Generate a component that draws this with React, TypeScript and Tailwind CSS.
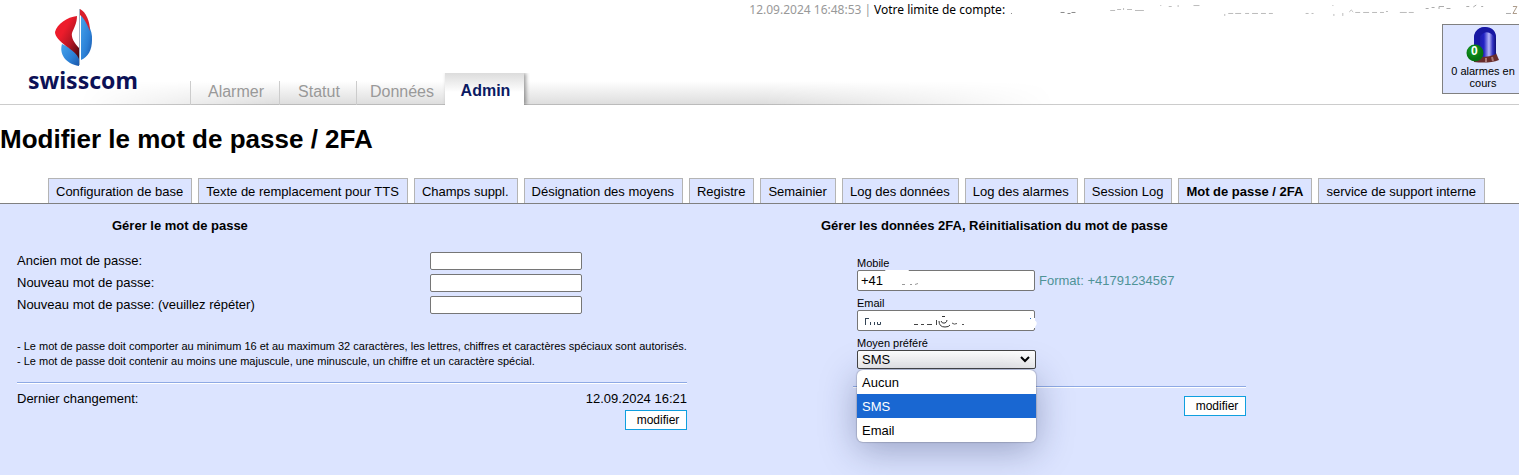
import { useState } from "react"
import clsx from "clsx"

const mainTabs = [
  { label: "Alarmer", width: "w-[89px]" },
  { label: "Statut", width: "w-[77px]" },
  { label: "Données", width: "w-[89px]" },
]

const subTabs = [
  "Configuration de base",
  "Texte de remplacement pour TTS",
  "Champs suppl.",
  "Désignation des moyens",
  "Registre",
  "Semainier",
  "Log des données",
  "Log des alarmes",
  "Session Log",
  "Mot de passe / 2FA",
  "service de support interne",
]

const passwordFields = [
  { id: "old", label: "Ancien mot de passe:" },
  { id: "new", label: "Nouveau mot de passe:" },
  { id: "repeat", label: "Nouveau mot de passe: (veuillez répéter)" },
]

const channels = ["Aucun", "SMS", "Email"]

function Logo() {
  return (
    <a href="#" className="z-10 col-start-1 row-start-1 mt-2 ml-7 flex w-28 flex-col self-start">
      <svg className="ml-[26px]" width="40" height="58" viewBox="0 0 40 58" aria-hidden="true">
        <defs>
          <linearGradient id="red" x1="0" y1="0" x2="1" y2="1">
            <stop offset="0.35" stopColor="#ed1c2b" />
            <stop offset="0.65" stopColor="#b01522" />
            <stop offset="0.95" stopColor="#4c0910" />
          </linearGradient>
          <linearGradient id="blue" x1="0" y1="0" x2="1" y2="1">
            <stop offset="0" stopColor="#46a4ec" />
            <stop offset="0.6" stopColor="#2b80d6" />
            <stop offset="1" stopColor="#1a55a8" />
          </linearGradient>
        </defs>
        <path d="M8 36C5 45 11 56 25 58V48C22 44 15 39 8 36Z" fill="url(#blue)" />
        <path d="M23 8C13 9 3 16 1 24C1 29 6 33 12 38C19 43 23 46 25 51V40C20 35 17 29 18 25C20 20 23 15 23 8Z" fill="url(#red)" />
        <path d="M27 7C32 12 39 22 38 32C38 42 34 49 27 52Z" fill="url(#blue)" />
        <path d="M26 1C32 4 36 13 36 23C33 16 30 10 26 7Z" fill="#d81f2c" />
        <path d="M25.5 1V57" stroke="#a9b4c4" strokeWidth="1" />
      </svg>
      <span className="font-['Noto_Sans'] text-[23px] leading-[28px] font-bold text-[#0c1156]">swisscom</span>
    </a>
  )
}

function AlarmBox() {
  return (
    <a
      href="#"
      className="z-10 col-start-1 row-start-1 mt-6 flex h-[70px] w-[77px] flex-col items-center self-start justify-self-end border border-r-0 border-[#808080] bg-[#dce4ff] pt-[2px] pl-1 text-center text-[11px] leading-[12px]"
    >
      <span className="relative mb-[2px] block">
        <svg width="34" height="36" viewBox="0 0 34 36" aria-hidden="true">
          <defs>
            <linearGradient id="lamp">
              <stop offset="0" stopColor="#17178c" />
              <stop offset="0.45" stopColor="#2222c4" />
              <stop offset="0.68" stopColor="#b8b8fa" />
              <stop offset="0.85" stopColor="#3030c0" />
              <stop offset="1" stopColor="#0e0e74" />
            </linearGradient>
            <radialGradient id="ball" cx="0.4" cy="0.35">
              <stop offset="0" stopColor="#18a428" />
              <stop offset="1" stopColor="#067310" />
            </radialGradient>
          </defs>
          <path d="M8 29L30 26L33 33C26 36 16 36 8 35Z" fill="#682c2c" />
          <path d="M20 35V31M27 34L26 30" stroke="#a77" strokeWidth="2" />
          <path d="M8 29V11C8 4 13 0 19 0C26 0 30 4 30 11V27C24 30 14 31 8 29Z" fill="url(#lamp)" />
          <path d="M8 12C8 4 13 0 19 0C26 0 30 4 30 12C25 4 19 3 14 9V26L8 28Z" fill="#1818a4" />
          <circle cx="9" cy="26" r="8.5" fill="url(#ball)" />
        </svg>
        <span className="absolute top-[18px] left-[5px] text-[12px] leading-[13px] font-bold text-white">0</span>
      </span>
      0 alarmes en cours
    </a>
  )
}

function Rule({ className }: { className?: string }) {
  return <hr className={clsx("h-[2px] border-t border-b border-t-[#8ea9e4] border-b-white", className)} />
}

function SubmitButton() {
  return (
    <button type="submit" className="h-5 w-[62px] border border-[#0f9fdf] bg-white pl-1 text-[12px] leading-[18px]">
      modifier
    </button>
  )
}

function PasswordForm() {
  return (
    <form className="w-[670px]" onSubmit={(e) => e.preventDefault()}>
      <h2 className="pl-[95px] leading-5 font-bold">Gérer le mot de passe</h2>
      <div className="mt-[14px]">
        {passwordFields.map((field) => (
          <div key={field.id} className="flex h-[22px] items-center">
            <label htmlFor={field.id} className="w-[413px]">
              {field.label}
            </label>
            <input
              id={field.id}
              type="password"
              className="h-[18px] w-[152px] rounded-[2px] border border-[#767676] bg-white px-1"
            />
          </div>
        ))}
      </div>
      <p className="mt-[23px] text-[11px] leading-[15px] whitespace-nowrap">
        - Le mot de passe doit comporter au minimum 16 et au maximum 32 caractères, les lettres, chiffres et caractères
        spéciaux sont autorisés.
        <br />- Le mot de passe doit contenir au moins une majuscule, une minuscule, un chiffre et un caractère spécial.
      </p>
      <Rule className="mt-[13px]" />
      <div className="mt-[5px] flex justify-between leading-5">
        <span>Dernier changement:</span>
        <span>12.09.2024 16:21</span>
      </div>
      <div className="mt-px flex justify-end">
        <SubmitButton />
      </div>
    </form>
  )
}

function TwoFactorForm() {
  const [mobile, setMobile] = useState("+41")
  const [email, setEmail] = useState("")
  const [channel, setChannel] = useState("SMS")

  return (
    <form className="w-[425px]" onSubmit={(e) => e.preventDefault()}>
      <h2 className="leading-5 font-bold whitespace-nowrap">Gérer les données 2FA, Réinitialisation du mot de passe</h2>
      <div className="mt-5 ml-9">
        <label htmlFor="mobile" className="block text-[11px] leading-[14px]">
          Mobile
        </label>
        <div className="flex items-center gap-1">
          <div className="relative">
            <input
              id="mobile"
              type="tel"
              value={mobile}
              onChange={(e) => setMobile(e.target.value)}
              className="block h-[21px] w-[178px] rounded-[2px] border border-[#767676] bg-white px-[3px]"
            />
            <svg className="absolute top-0 left-[25px]" width="60" height="20" aria-hidden="true">
              <path d="M4 1H26" stroke="#fff" strokeWidth="2" strokeLinecap="round" />
              <path d="M20 14.5H23M28 14.5H30M33 14.5L36 13.5" stroke="#999" fill="none" />
            </svg>
          </div>
          <span className="text-[#4f9397]">Format: +41791234567</span>
        </div>
        <label htmlFor="email" className="mt-[5px] block text-[11px] leading-[14px]">
          Email
        </label>
        <div className="relative w-[178px]">
          <input
            id="email"
            type="email"
            value={email}
            onChange={(e) => setEmail(e.target.value)}
            className="block h-[21px] w-[178px] rounded-[2px] border border-[#767676] bg-white px-[3px]"
          />
          <svg className="absolute top-0 left-0" width="184" height="20" aria-hidden="true">
            <path d="M175 8H178V18H175ZM177 10Q182 12 178 17Z" fill="#fff" />
            <path d="M8.5 8V15M8 8.5H12M13.5 12V15M17.5 12V15M20.5 12V14.5H23.5V12" stroke="#345" fill="none" />
            <path d="M57 14.5H61M64 14.5H67M70 14.5H75M79.5 10V15" stroke="#444" fill="none" />
            <path d="M82 11Q82 17 88 17Q92 17 93 15M84 11Q85 14 88 13Q90 12 90 10M85 6.5H88" stroke="#333" fill="none" />
            <path d="M95 13Q97 15 100 13.5M105 14.5H107" stroke="#555" fill="none" />
            <path d="M173.5 8V9" stroke="#2b6fc4" />
          </svg>
        </div>
        <label htmlFor="channel" className="mt-[5px] block text-[11px] leading-[14px]">
          Moyen préféré
        </label>
        <div className="relative w-[179px]">
          <select
            id="channel"
            value={channel}
            onChange={(e) => setChannel(e.target.value)}
            className="block h-[19px] w-full appearance-none rounded-[2px] border border-[#444] bg-linear-to-b from-white to-[#f0f0f0] px-1 leading-[16px]"
          >
            {channels.map((c) => (
              <option key={c}>{c}</option>
            ))}
          </select>
          <svg className="pointer-events-none absolute top-[6px] right-[6px]" width="10" height="7" aria-hidden="true">
            <path d="M1 1L5 5L9 1" stroke="#000" strokeWidth="2" fill="none" />
          </svg>
          <ul
            role="listbox"
            aria-label="Moyen préféré"
            className="absolute top-5 left-0 z-10 w-full overflow-hidden rounded-[6px] bg-white shadow-[0_0_1px_1px_rgba(0,0,0,0.15),0_8px_36px_rgba(30,40,90,0.35)]"
          >
            {channels.map((c) => (
              <li
                key={c}
                role="option"
                aria-selected={c === channel}
                onClick={() => setChannel(c)}
                className={clsx("h-6 px-[5px] leading-[25px]", c === channel && "bg-[#1967d2] text-white")}
              >
                {c}
              </li>
            ))}
          </ul>
        </div>
      </div>
      <Rule className="mt-[17px] ml-8" />
      <div className="mt-2 flex justify-end">
        <SubmitButton />
      </div>
    </form>
  )
}

export default function App() {
  return (
    <div className="flex min-h-screen flex-col overflow-x-hidden bg-white font-['Liberation_Sans',Arial,sans-serif] text-[13px] text-black">
      {/* Header */}
      <header className="grid h-[105px] grid-cols-1 border-b border-[#ccc]">
        <Logo />
        <div className="z-10 col-start-1 row-start-1 ml-[49%] flex h-5 items-center self-start pl-[5px] font-['Noto_Sans'] text-[12px] whitespace-nowrap">
          <span className="text-[#999]">12.09.2024 16:48:53</span>
          <span className="px-[3px] text-[#999]">|</span>
          <span>Votre limite de compte:</span>
          <svg className="ml-1" width="514" height="20" viewBox="1008 0 514 20" fill="none" aria-hidden="true">
            <path d="M1010 13.5h1M1060 12.5h4M1067 13.5h3M1071 12.5h4" stroke="#888" />
            <path d="M1110 10.5h5M1117 9.5h4M1123.5 10v-2M1127 9.5h5M1135 10.5h9M1161 6v-1M1169 6.5h3M1178.5 5v2M1194 5.5h6" stroke="#bbb" />
            <path d="M1225.5 14v2M1229 13.5h5M1236 13.5h6M1246 13.5h4M1253 13.5h6M1262 13.5h5M1270 13.5h4M1307 13.5h3M1313 13.5h2" stroke="#bbb" />
            <path d="M1334.5 5v1M1335.5 14v2M1344.5 13v3M1351 12l2-2l2 2M1357 12.5h5M1365 12.5h6M1374 12.5h5M1382 12.5h4M1388 11.5h2M1402 12.5h7M1411 12.5h5" stroke="#bbb" />
            <path d="M1428 8.5h3M1434 7.5h3M1441.5 9V6.5h5M1449 8.5h4M1469 6.5h3M1476 7l3-2M1484 6.5h2M1509 13.5h5" stroke="#aaa" />
            <path d="M1516 6.5h4l-4 7h4" stroke="#a98" />
          </svg>
        </div>
        <AlarmBox />
        <nav className="col-start-1 row-start-1 -mb-px ml-20 grid w-[64.2%] self-end">
          <div className="col-start-1 row-start-1 h-6 self-end border-b border-[#bbb] bg-linear-to-b from-white to-[#dedede] mask-[linear-gradient(to_right,transparent,#000_20%,#000_70%,transparent)]" />
          <div className="z-10 col-start-1 row-start-1 ml-[110px] flex h-8 items-end text-[16px]">
            {mainTabs.map((tab) => (
              <a
                key={tab.label}
                href="#"
                className={clsx("h-6 border-l border-[#ccc] pl-[2px] text-center leading-[21px] text-[#999]", tab.width)}
              >
                {tab.label}
              </a>
            ))}
            <a
              href="#"
              className="h-8 w-[79px] bg-linear-to-b from-[#dcdcdc] via-white via-60% to-white pl-[2px] text-center leading-[36px] font-bold text-[#0b1a63] shadow-[2px_0_4px_rgba(0,0,0,0.4)] [clip-path:inset(0_-6px_0_-3px)]"
            >
              Admin
            </a>
          </div>
        </nav>
      </header>

      {/* Title */}
      <h1 className="mt-[18px] text-[26px] leading-8 font-bold">Modifier le mot de passe / 2FA</h1>

      {/* Sub navigation */}
      <nav className="mt-[23px] flex gap-[6px] border-b border-[#808080] pl-12">
        {subTabs.map((tab) => (
          <a
            key={tab}
            href="#"
            className={clsx(
              "h-[25px] border border-b-0 border-[#b4b4b4] bg-[#dce4ff] pr-2 pl-[7px] leading-[26px] whitespace-nowrap",
              tab === "Mot de passe / 2FA" && "font-bold"
            )}
          >
            {tab}
          </a>
        ))}
      </nav>

      {/* Forms */}
      <main className="flex flex-1 gap-[134px] bg-[#dce4ff] pt-3 pl-[17px]">
        <PasswordForm />
        <TwoFactorForm />
      </main>
    </div>
  )
}
